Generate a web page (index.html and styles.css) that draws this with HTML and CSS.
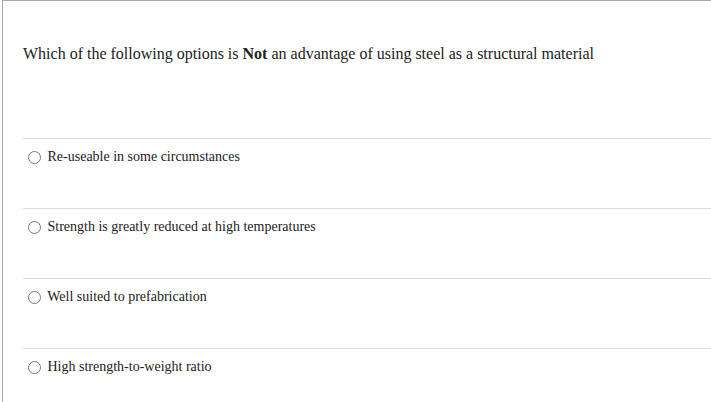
FILE: index.html
```html
<!DOCTYPE html>
<html>
<head>
<meta charset="utf-8">
<link rel="stylesheet" href="styles.css">
</head>
<body>
<div class="panel">
  <p class="question">Which of the following options is <strong>Not</strong> an advantage of using steel as a structural material</p>
  <ul class="options">
    <li class="option"><label><input type="radio" name="q"> Re-useable in some circumstances</label></li>
    <li class="option"><label><input type="radio" name="q"> Strength is greatly reduced at high temperatures</label></li>
    <li class="option"><label><input type="radio" name="q"> Well suited to prefabrication</label></li>
    <li class="option"><label><input type="radio" name="q"> High strength-to-weight ratio</label></li>
  </ul>
</div>
</body>
</html>
```
FILE: styles.css
```css
html, body {
  margin: 0;
  padding: 0;
  background: #fff;
}
body {
  font-family: "Liberation Serif", "Times New Roman", serif;
  color: #222;
  overflow: hidden;
}
.panel {
  margin-left: 2px;
  border-top: 1px solid #a9a9a9;
  border-left: 1px solid #a9a9a9;
  padding-left: 20px;
  height: 420px;
}
.question {
  margin: 0;
  padding: 44px 0 75px 0;
  font-size: 16px;
  line-height: 18px;
}
.question strong {
  font-weight: bold;
}
.options {
  list-style: none;
  margin: 0;
  padding: 0;
}
.option {
  border-top: 1px solid #dcdcdc;
  padding-top: 10px;
  box-sizing: border-box;
  height: 70px;
  font-size: 14px;
  line-height: 16px;
}
.option label {
  display: flex;
  align-items: center;
  white-space: pre;
}
.option input {
  margin: 0 3px 0 5px;
  width: 13px;
  height: 13px;
}
```
